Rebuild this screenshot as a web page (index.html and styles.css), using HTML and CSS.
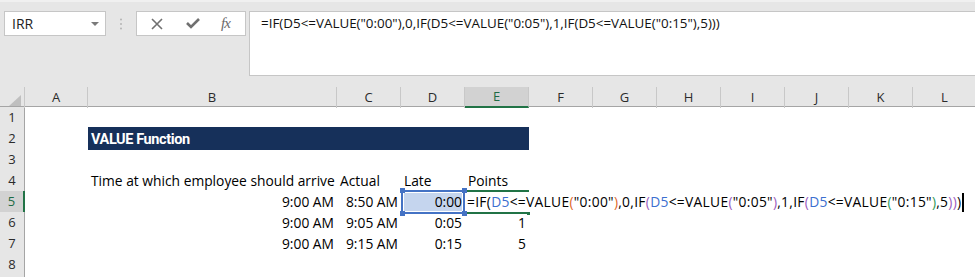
FILE: index.html
```html
<!DOCTYPE html>
<html lang="en">
<head>
    <meta charset="UTF-8">
    <title>VALUE Function</title>
    <link rel="stylesheet" href="styles.css">
</head>
<body>
    <!-- Formula bar -->
    <div class="formula-bar">
        <div class="name-box">
            <span class="name">IRR</span>
            <span class="caret"></span>
        </div>
        <div class="grip">
            <svg width="4" height="12" viewBox="0 0 4 12"><circle cx="2" cy="1.5" r="1"/><circle cx="2" cy="6" r="1"/><circle cx="2" cy="10.5" r="1"/></svg>
        </div>
        <div class="fx-box">
            <svg class="icon" width="12" height="12" viewBox="0 0 12 12"><path d="M1 1 L11 11 M11 1 L1 11" stroke-width="1.6"/></svg>
            <svg class="icon" width="14" height="11" viewBox="0 0 14 11"><path d="M1 5 L5 9 L13 1" stroke-width="2.6"/></svg>
            <span class="fx"><i>f</i><i>x</i></span>
        </div>
        <div class="formula-input">=IF(D5&lt;=VALUE("0:00"),0,IF(D5&lt;=VALUE("0:05"),1,IF(D5&lt;=VALUE("0:15"),5)))</div>
    </div>

    <!-- Worksheet -->
    <div class="sheet">
        <div class="row head">
            <div class="corner"><span class="tri"></span></div>
            <div class="col">A</div>
            <div class="col">B</div>
            <div class="col">C</div>
            <div class="col">D</div>
            <div class="col picked">E</div>
            <div class="col">F</div>
            <div class="col">G</div>
            <div class="col">H</div>
            <div class="col">I</div>
            <div class="col">J</div>
            <div class="col">K</div>
            <div class="col">L</div>
        </div>
        <div class="row">
            <div class="rh">1</div>
        </div>
        <div class="row">
            <div class="rh">2</div>
            <div></div>
            <div class="title">VALUE Function</div>
        </div>
        <div class="row">
            <div class="rh">3</div>
        </div>
        <div class="row">
            <div class="rh">4</div>
            <div></div>
            <div class="cell">Time at which employee should arrive</div>
            <div class="cell">Actual</div>
            <div class="cell">Late</div>
            <div class="cell">Points</div>
        </div>
        <div class="row">
            <div class="rh picked">5</div>
            <div></div>
            <div class="cell num">9:00 AM</div>
            <div class="cell num">8:50 AM</div>
            <div class="cell num ref">
                <span class="ref-box"></span>
                <span class="knob tl"></span><span class="knob tr"></span>
                <span class="knob bl"></span><span class="knob br"></span>
                <span class="val">0:00</span>
            </div>
            <div class="cell active">
                <span class="edit">=IF<b class="p0">(</b><b class="r">D5</b>&lt;=VALUE<b class="p1">(</b>"0:00"<b class="p1">)</b>,0,IF<b class="p2">(</b><b class="r">D5</b>&lt;=VALUE<b class="p2">(</b>"0:05"<b class="p2">)</b>,1,IF<b class="p2">(</b><b class="r">D5</b>&lt;=VALUE<b class="p3">(</b>"0:15"<b class="p3">)</b>,5<b class="p2">)</b><b class="p2">)</b><b class="p0">)</b></span><span class="cursor"></span>
                <span class="fill-handle"></span>
            </div>
        </div>
        <div class="row">
            <div class="rh">6</div>
            <div></div>
            <div class="cell num">9:00 AM</div>
            <div class="cell num">9:05 AM</div>
            <div class="cell num">0:05</div>
            <div class="cell num">1</div>
        </div>
        <div class="row">
            <div class="rh">7</div>
            <div></div>
            <div class="cell num">9:00 AM</div>
            <div class="cell num">9:15 AM</div>
            <div class="cell num">0:15</div>
            <div class="cell num">5</div>
        </div>
        <div class="row">
            <div class="rh">8</div>
        </div>
        <div class="row">
            <div class="rh"></div>
        </div>
    </div>
</body>
</html>
```

FILE: styles.css
```css
/* Global */
* {
    margin: 0;
    padding: 0;
    box-sizing: border-box;
}

body {
    width: 975px;
    height: 277px;
    overflow: hidden;
    background: #e6e6e6;
    font-family: 'Open Sans', sans-serif;
    color: #000;
}

/* Formula bar */
.formula-bar {
    height: 87px;
    display: flex;
    align-items: flex-start;
    padding: 9px 0 0 4px;
    border-top: 2px solid #f0f0f0;
}

.name-box {
    width: 102px;
    height: 25px;
    background: #fff;
    border: 1px solid #c6c6c6;
    display: flex;
    align-items: center;
    justify-content: space-between;
    padding: 0 6px 0 7px;
}

.name-box .name {
    font-size: 14px;
    color: #222;
}

.caret {
    width: 0;
    height: 0;
    border-left: 4px solid transparent;
    border-right: 4px solid transparent;
    border-top: 4px solid #7a7a7a;
}

.grip {
    width: 30px;
    height: 25px;
    display: flex;
    align-items: center;
    justify-content: center;
    fill: #b4b4b4;
}

.fx-box {
    width: 110px;
    height: 25px;
    background: #fff;
    border: 1px solid #c6c6c6;
    display: flex;
    align-items: center;
    padding-left: 14px;
    gap: 23px;
}

.fx-box .icon {
    fill: none;
    stroke: #707070;
}

.fx {
    font-family: 'Liberation Serif', serif;
    font-size: 15px;
    color: #6a6a6a;
    letter-spacing: -1px;
    margin-left: -2px;
}

.formula-input {
    flex: 1;
    height: 65px;
    margin-left: 3px;
    background: #fff;
    border: 1px solid #c6c6c6;
    border-right: none;
    padding: 2px 0 0 11px;
    font-size: 13.4px;
    white-space: nowrap;
    color: #111;
}

/* Worksheet */
.sheet {
    height: 190px;
    overflow: hidden;
    background: #fff;
    font-size: 13.8px;
}

.row {
    display: grid;
    grid-template-columns: 25px 63px 249px repeat(10, 64px);
    height: 21px;
}

.row.head {
    height: 20px;
    background: #e6e6e6;
    border-bottom: 1px solid #a5a5a5;
}

.corner {
    position: relative;
    border-right: 1px solid #c8c8c8;
}

.corner .tri {
    position: absolute;
    right: 3px;
    bottom: 2px;
    width: 0;
    height: 0;
    border-left: 12px solid transparent;
    border-bottom: 11px solid #bfbfbf;
}

.col {
    border-right: 1px solid #c8c8c8;
    text-align: center;
    line-height: 20px;
    font-size: 13px;
    color: #2b2b2b;
}

.col.picked {
    background: #d2d2d2;
    color: #1e6b45;
    border-bottom: 2px solid #217346;
    line-height: 19px;
}

.rh {
    background: #e6e6e6;
    border-right: 1px solid #a5a5a5;
    border-bottom: 1px solid #c8c8c8;
    text-align: center;
    line-height: 21px;
    font-size: 13px;
    color: #2b2b2b;
}

.rh.picked {
    background: #d2d2d2;
    color: #1e6b45;
    border-right: 2px solid #217346;
}

.cell {
    padding: 1px 3px 0 3px;
    line-height: 20px;
    white-space: nowrap;
}

.cell.num {
    text-align: right;
}

.title {
    grid-column: span 4;
    background: #16305a;
    color: #fff;
    font-family: 'Roboto', sans-serif;
    font-weight: bold;
    font-size: 14.5px;
    letter-spacing: -0.4px;
    line-height: 21px;
    padding: 2px 0 0 3px;
    margin-top: -1px;
    height: 23px;
}

/* D5 reference box */
.ref {
    position: relative;
}

.ref-box {
    position: absolute;
    top: -1px;
    bottom: -1px;
    left: 0;
    right: 0;
    border: 2px solid #4472c4;
    background: #c5d5ee;
    box-shadow: inset 0 0 0 1px #fff;
}

.knob {
    position: absolute;
    width: 5px;
    height: 5px;
    background: #4472c4;
}

.knob.tl { top: -3px; left: -1px; }
.knob.tr { top: -3px; right: -2px; }
.knob.bl { bottom: -3px; left: -1px; }
.knob.br { bottom: -3px; right: -2px; }

.ref .val {
    position: relative;
}

/* E5 active cell in edit mode */
.active {
    position: relative;
    overflow: visible;
    padding-left: 2px;
}

.active::before,
.active::after {
    content: "";
    position: absolute;
    left: 2px;
    right: 0;
    height: 2px;
    background: #217346;
}

.active::before { top: -1px; }
.active::after { bottom: -1px; }

.edit {
    letter-spacing: 0.3px;
}

.edit b {
    font-weight: normal;
}

.edit .r { color: #3c6fd0; }
.edit .p0 { color: #000; }
.edit .p1 { color: #e0662a; }
.edit .p2 { color: #9a5cc0; }
.edit .p3 { color: #2f9a5a; }

.cursor {
    display: inline-block;
    width: 2px;
    height: 19px;
    background: #000;
    vertical-align: -5px;
    margin-left: 1px;
}

.fill-handle {
    position: absolute;
    right: -2px;
    bottom: -3px;
    width: 5px;
    height: 5px;
    background: #217346;
    border: 1px solid #fff;
}
```
